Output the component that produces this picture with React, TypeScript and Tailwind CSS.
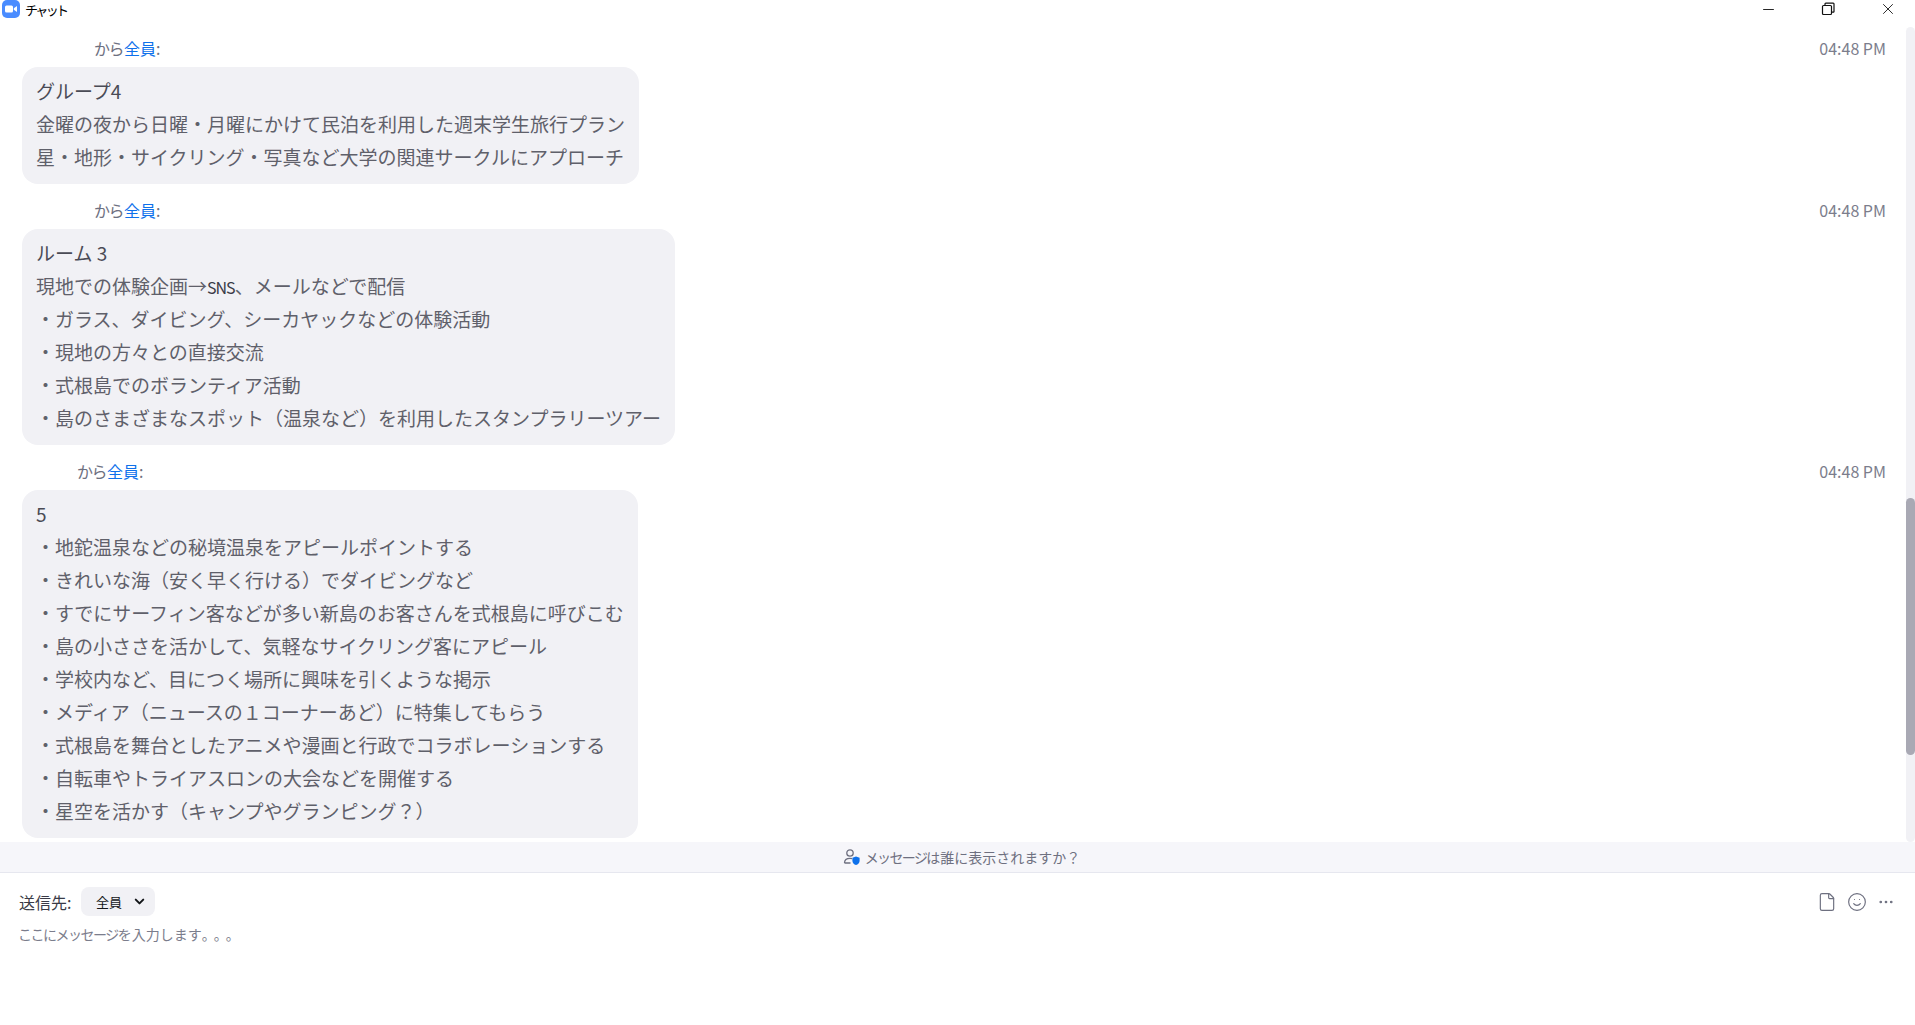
import React from 'react';
import { ChevronDown, Minus, X, File, Smile, Ellipsis } from 'lucide-react';

const font = "font-['Noto_Sans_CJK_JP','Noto_Sans',sans-serif]";

const messages = [
  {
    indent: 'pl-[94px]',
    lines: [
      'グループ4',
      '金曜の夜から日曜・月曜にかけて民泊を利用した週末学生旅行プラン',
      '星・地形・サイクリング・写真など大学の関連サークルにアプローチ',
    ],
  },
  {
    indent: 'pl-[94px]',
    lines: [
      'ルーム 3',
      <>現地での体験企画→<span className="text-[16px] tracking-[-1px] text-[#3a3b47]">SNS</span>、メールなどで配信</>,
      '・ガラス、ダイビング、シーカヤックなどの体験活動',
      '・現地の方々との直接交流',
      '・式根島でのボランティア活動',
      '・島のさまざまなスポット（温泉など）を利用したスタンプラリーツアー',
    ],
  },
  {
    indent: 'pl-[77px]',
    lines: [
      '5',
      '・地鉈温泉などの秘境温泉をアピールポイントする',
      '・きれいな海（安く早く行ける）でダイビングなど',
      '・すでにサーフィン客などが多い新島のお客さんを式根島に呼びこむ',
      '・島の小ささを活かして、気軽なサイクリング客にアピール',
      '・学校内など、目につく場所に興味を引くような掲示',
      '・メディア（ニュースの１コーナーあど）に特集してもらう',
      '・式根島を舞台としたアニメや漫画と行政でコラボレーションする',
      '・自転車やトライアスロンの大会などを開催する',
      '・星空を活かす（キャンプやグランピング？）',
    ],
  },
];

function ZoomLogo() {
  return (
    <svg width="18" height="18" viewBox="0 0 18 18" className="shrink-0">
      <rect width="18" height="18" rx="5" fill="#4a8cff" />
      <rect x="3" y="5.5" width="8" height="7" rx="1.5" fill="#fff" />
      <path d="M11.8 8.2 15 6v6l-3.2-2.2z" fill="#fff" />
    </svg>
  );
}

function RestoreIcon() {
  return (
    <svg width="14" height="14" viewBox="0 0 14 14" fill="none" stroke="#111" strokeWidth="1.2">
      <rect x="1.5" y="3.5" width="9" height="9" rx="1" />
      <path d="M4 3.5V2a.8.8 0 0 1 .8-.8h7.4a.8.8 0 0 1 .8.8v7.4a.8.8 0 0 1-.8.8h-1.7" />
    </svg>
  );
}

function WhoCanSeeIcon() {
  return (
    <svg width="18" height="18" viewBox="0 0 18 18" fill="none" className="shrink-0">
      <circle cx="7" cy="5" r="3.2" stroke="#6e7080" strokeWidth="1.3" />
      <path d="M1.5 15c0-3 2.3-4.6 5.5-4.6 .8 0 1.5.1 2 .3M1.5 15h6" stroke="#6e7080" strokeWidth="1.3" />
      <path d="M13 8.5l3.6 1.2v3c0 2.2-1.6 3.6-3.6 4.3-2-.7-3.6-2.1-3.6-4.3v-3z" fill="#0e71eb" />
    </svg>
  );
}

export default function App() {
  return (
    <div className={`${font} flex h-[1025px] w-[1915px] flex-col overflow-hidden bg-white`}>
      <div className="flex h-[18px] shrink-0 items-center justify-between">
        <div className="flex items-center gap-[5px] pl-[2px]">
          <ZoomLogo />
          <span className="text-[13px] leading-none tracking-[-2.6px] text-black">チャット</span>
        </div>
        <div className="flex items-center gap-[44px] pr-[18px]">
          <Minus size={17} strokeWidth={1.2} className="text-black" />
          <RestoreIcon />
          <X size={18} strokeWidth={1.1} className="text-black" />
        </div>
      </div>

      <div className="relative flex h-[824px] shrink-0 flex-col">
        <div className="flex flex-col gap-[12px] pt-[16px]">
          {messages.map((m, i) => (
            <div key={i} className="flex flex-col">
              <div className={`flex h-[28px] items-center justify-between pr-[29px] ${m.indent}`}>
                <span className="text-[16px] text-[#6e7080]">
                  <span className="tracking-[-1.5px]">から</span>
                  <span className="ml-[1px] text-[#0e71eb]">全員</span>:
                </span>
                <span className="text-[16px] text-[#7b7d8c]">04:48 PM</span>
              </div>
              <div className="mt-[5px] ml-[22px] w-fit rounded-[16px] bg-[#f1f1f5] px-[14px] pt-[7px] pb-[11px]">
                {m.lines.map((line, j) => (
                  <div key={j} className={`h-[33px] text-[19px] leading-[33px] whitespace-pre ${j === 0 ? 'text-[#4a4b55]' : 'text-[#5f606a]'}`}>
                    {line}
                  </div>
                ))}
              </div>
            </div>
          ))}
        </div>
        <div className="absolute top-[9px] right-0 bottom-0 w-[9px] rounded-full bg-[#f1f1f5]">
          <div className="absolute top-[471px] h-[257px] w-[9px] rounded-full bg-[#a9a9b4]" />
        </div>
      </div>

      <div className="flex h-[31px] shrink-0 items-center justify-center gap-[4px] border-b border-[#e6e7ef] bg-[#f6f6fa] pl-[8px] text-[14px] text-[#6e7080]">
        <WhoCanSeeIcon />
        <span>
          <span className="tracking-[-1.6px]">メッセージ</span>は誰に表示されますか？
        </span>
      </div>

      <div className="flex items-center justify-between pt-[14px] pr-[20px] pl-[19px]">
        <div className="flex items-center gap-[10px]">
          <span className="text-[16px] text-[#3a3b47]">送信先:</span>
          <div className="flex h-[29px] w-[74px] items-center justify-center gap-[10px] rounded-[8px] bg-[#f1f1f5] pl-[6px] text-[13px] text-[#131619]">
            <span>全員</span>
            <ChevronDown size={15} strokeWidth={3.2} />
          </div>
        </div>
        <div className="flex items-center gap-[10px] text-[#6e7080]">
          <File size={20} strokeWidth={1.4} />
          <Smile size={20} strokeWidth={1.4} />
          <Ellipsis size={18} strokeWidth={1.6} />
        </div>
      </div>
      <div className="pt-[8px] pl-[18px] text-[14px] text-[#7b7d8c]">
        <span className="tracking-[-1.5px]">ここにメッセージ</span>を入力します<span className="tracking-[-2px] [text-spacing-trim:space-all]">。。。</span>
      </div>
    </div>
  );
}
